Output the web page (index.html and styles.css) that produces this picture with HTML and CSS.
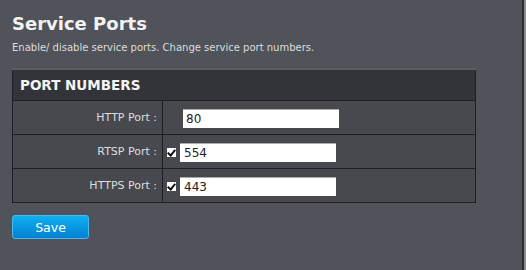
FILE: index.html
```html
<!DOCTYPE html>
<html lang="en">
<head>
    <meta charset="UTF-8">
    <title>Service Ports</title>
    <link rel="stylesheet" href="styles.css">
</head>
<body>
    <div class="page">
        <h2>Service Ports</h2>
        <p class="intro">Enable/ disable service ports. Change service port numbers.</p>

        <table class="ports">
            <tr>
                <th colspan="2">PORT NUMBERS</th>
            </tr>
            <tr>
                <td class="label">HTTP Port :</td>
                <td class="field"><input type="text" class="port wide" value="80"></td>
            </tr>
            <tr>
                <td class="label">RTSP Port :</td>
                <td class="field"><span class="check"></span><input type="text" class="port" value="554"></td>
            </tr>
            <tr>
                <td class="label">HTTPS Port :</td>
                <td class="field"><span class="check"></span><input type="text" class="port" value="443"></td>
            </tr>
        </table>

        <button class="save">Save</button>
    </div>
</body>
</html>
```

FILE: styles.css
```css
html, body {
    margin: 0;
    height: 100%;
}
body {
    background-color: #8c8d90;
    font-family: "DejaVu Sans", Verdana, sans-serif;
    color: #e8e8e8;
}
.page {
    width: 524px;
    height: 100%;
    box-sizing: border-box;
    padding: 12px 0 0 12px;
    background-color: #50535a;
    border-right: 2px solid #2c2d31;
}
h2 {
    margin: 0;
    font-size: 18px;
    font-weight: bold;
    line-height: 24px;
    color: #f2f2f2;
}
.intro {
    margin: 5px 0 0;
    font-size: 10px;
    line-height: 14px;
    color: #dcdcdc;
}
.ports {
    margin-top: 13px;
    width: 464px;
    border-collapse: collapse;
    border: 1px solid #1e1f22;
}
.ports th {
    height: 30px;
    padding: 0 0 0 7px;
    text-align: left;
    font-size: 13.5px;
    font-weight: bold;
    color: #f4f4f4;
    background-color: #333439;
    border-top: 2px solid #5b5d63;
    border-bottom: 1px solid #1e1f22;
}
.ports td {
    height: 33px;
    padding: 0;
    background-color: #48494e;
    border-bottom: 1px solid #1e1f22;
    border-top: 1px solid #5a5b60;
}
.ports td.label {
    width: 144px;
    padding-right: 5px;
    text-align: right;
    font-size: 11px;
    color: #dedede;
    border-right: 1px solid #1e1f22;
}
.ports td.field {
    padding-left: 4px;
}
.check {
    display: inline-block;
    width: 9px;
    height: 9px;
    margin-right: 4px;
    vertical-align: middle;
    background-color: #fff;
    position: relative;
}
.check::after {
    content: "";
    position: absolute;
    left: 2px;
    top: 0;
    width: 3px;
    height: 6px;
    border: solid #111;
    border-width: 0 2px 2px 0;
    transform: rotate(40deg);
}
.port {
    width: 156px;
    height: 19px;
    box-sizing: border-box;
    padding: 0 4px;
    border: none;
    border-top: 1px solid #aaa;
    background: #fff;
    font-family: "DejaVu Sans", Verdana, sans-serif;
    font-size: 12px;
    color: #222;
    vertical-align: middle;
}
.port.wide {
    margin-left: 16px;
    padding-left: 3px;
}
.save {
    display: block;
    margin-top: 12px;
    width: 77px;
    height: 24px;
    border: 1px solid #49b8ef;
    border-radius: 3px;
    background: linear-gradient(#0fb0f0, #0381d2);
    color: #fff;
    font-family: "DejaVu Sans", Verdana, sans-serif;
    font-size: 12.5px;
    cursor: pointer;
}
```
